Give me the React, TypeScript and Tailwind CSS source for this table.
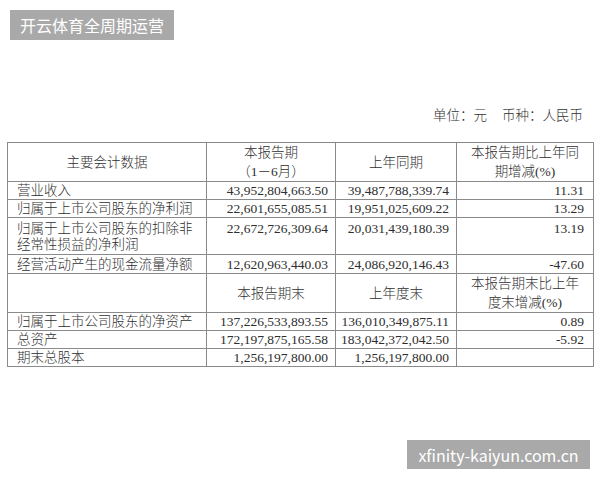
import React from "react"

const cell = "border border-[#8a8a8a] p-0"
const num = "text-right pr-[7px] align-middle"

const rowsTop = [
  ["营业收入", "43,952,804,663.50", "39,487,788,339.74", "11.31"],
  ["归属于上市公司股东的净利润", "22,601,655,085.51", "19,951,025,609.22", "13.29"],
]

const rowsBottom = [
  ["归属于上市公司股东的净资产", "137,226,533,893.55", "136,010,349,875.11", "0.89"],
  ["总资产", "172,197,875,165.58", "183,042,372,042.50", "-5.92"],
  ["期末总股本", "1,256,197,800.00", "1,256,197,800.00", ""],
]

const Row = ({ r }: { r: string[] }) => (
  <tr className="h-[18px]">
    <td className={`${cell} pl-[9px] align-middle`}>{r[0]}</td>
    <td className={`${cell} ${num}`}>{r[1]}</td>
    <td className={`${cell} ${num}`}>{r[2]}</td>
    <td className={`${cell} ${num} pr-[9px]`}>{r[3]}</td>
  </tr>
)

export default function App() {
  return (
    <div className="flex h-[480px] w-[600px] flex-col overflow-hidden bg-white">
      <div className="pl-[10px] pt-[10px]">
        <div className="inline-flex h-[30px] items-center bg-[#a9a9a9] px-[10px] font-['Noto_Sans_CJK_SC',sans-serif] text-[16px] text-white">
          开云体育全周期运营
        </div>
      </div>

      <div className="mt-[68px] pr-[17px] text-right font-['Liberation_Serif','Noto_Sans_CJK_SC',serif] text-[13.5px] leading-[16px] font-light text-[#333]">
        单位：元<span className="ml-[15px]">币种：人民币</span>
      </div>

      <table className="ml-[7px] mt-[18px] w-[586px] table-fixed border-collapse font-['Liberation_Serif','Noto_Sans_CJK_SC',serif] text-[13.5px] leading-[17px] font-light text-[#2e2e2e]">
        <colgroup>
          <col className="w-[199px]" />
          <col className="w-[129px]" />
          <col className="w-[121px]" />
          <col className="w-[137px]" />
        </colgroup>
        <tbody>
          <tr className="h-[39px] text-center leading-[19px]">
            <td className={cell}>主要会计数据</td>
            <td className={cell}>
              本报告期
              <br />
              （1－6月）
            </td>
            <td className={cell}>上年同期</td>
            <td className={cell}>
              本报告期比上年同
              <br />
              期增减(%)
            </td>
          </tr>
          {rowsTop.map((r) => (
            <Row key={r[0]} r={r} />
          ))}
          <tr className="h-[37px] leading-[16px]">
            <td className={`${cell} pl-[9px] pt-[3px] align-top`}>
              归属于上市公司股东的扣除非
              <br />
              经常性损益的净利润
            </td>
            <td className={`${cell} pr-[7px] pt-[3px] text-right align-top`}>22,672,726,309.64</td>
            <td className={`${cell} pr-[7px] pt-[3px] text-right align-top`}>20,031,439,180.39</td>
            <td className={`${cell} pr-[9px] pt-[3px] text-right align-top`}>13.19</td>
          </tr>
          <tr className="h-[19px]">
            <td className={`${cell} pl-[9px] align-middle`}>经营活动产生的现金流量净额</td>
            <td className={`${cell} ${num}`}>12,620,963,440.03</td>
            <td className={`${cell} ${num}`}>24,086,920,146.43</td>
            <td className={`${cell} ${num} pr-[9px]`}>-47.60</td>
          </tr>
          <tr className="h-[38px] text-center leading-[19px]">
            <td className={cell}></td>
            <td className={cell}>本报告期末</td>
            <td className={cell}>上年度末</td>
            <td className={cell}>
              本报告期末比上年
              <br />
              度末增减(%)
            </td>
          </tr>
          {rowsBottom.map((r) => (
            <Row key={r[0]} r={r} />
          ))}
        </tbody>
      </table>

      <div className="mt-auto flex justify-end pb-[11px] pr-[10px]">
        <div className="flex h-[29px] w-[183px] items-center justify-center bg-[#a9a9a9] font-['Noto_Sans_CJK_SC',sans-serif] text-[16px] text-white">
          xfinity-kaiyun.com.cn
        </div>
      </div>
    </div>
  )
}
